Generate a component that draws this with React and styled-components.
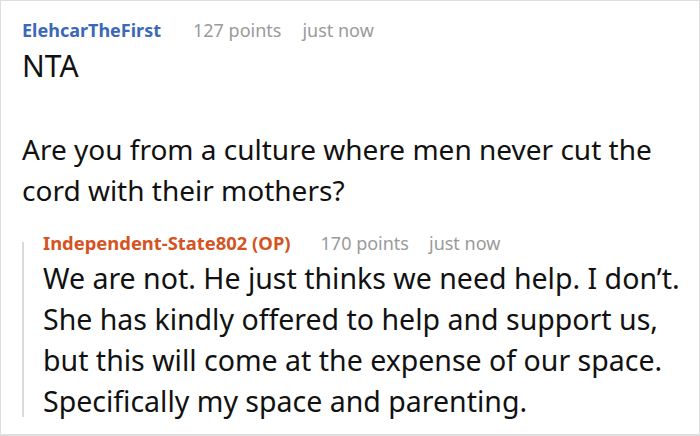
import styled, { createGlobalStyle } from "styled-components";

const GlobalStyle = createGlobalStyle`
  html, body {
    margin: 0;
    padding: 0;
    background: #fff;
  }
  body {
    font-family: "Noto Sans", "Open Sans", sans-serif;
  }
`;

const Card = styled.div`
  box-sizing: border-box;
  width: 700px;
  height: 436px;
  border: 1px solid #dedede;
  border-bottom-width: 2px;
  padding: 18px 0 0 21px;
  overflow: hidden;
`;

const Meta = styled.div`
  display: flex;
  align-items: baseline;
  height: ${(p) => (p.$reply ? "24px" : "22px")};
  line-height: ${(p) => (p.$reply ? "24px" : "22px")};
  white-space: nowrap;
`;

const Author = styled.span`
  font-weight: 700;
  font-size: ${(p) => (p.$op ? "18.4px" : "18px")};
  color: ${(p) => (p.$op ? "#d4531f" : "#3b69b5")};
`;

const Info = styled.span`
  font-size: 18px;
  color: #9a9a9a;
  margin-left: ${(p) => p.$gap}px;
`;

const Body = styled.div`
  margin-top: ${(p) => (p.$reply ? "3px" : "4px")};
  font-size: ${(p) => (p.$reply ? "28.5px" : "28px")};
  line-height: 41px;
  color: #111;
  width: ${(p) => (p.$reply ? "645px" : "660px")};
`;

const Para = styled.p`
  margin: 0;
  font-size: ${(p) => (p.$size ? `${p.$size}px` : "inherit")};
  line-height: ${(p) => (p.$size ? "42px" : "inherit")};
`;

const Spacer = styled.div`
  height: 42px;
`;

const Reply = styled.div`
  position: relative;
  margin-top: 20px;
  padding-left: 21px;

  &::before {
    content: "";
    position: absolute;
    left: 0;
    top: 11px;
    bottom: 5px;
    width: 1.5px;
    background: #dadada;
  }
`;

function Comment({ author, points, time, op, reply, gaps, children }) {
  return (
    <>
      <Meta $reply={reply}>
        <Author $op={op}>{author}</Author>
        <Info $gap={gaps[0]}>{points} points</Info>
        <Info $gap={gaps[1]}>{time}</Info>
      </Meta>
      <Body $reply={reply}>{children}</Body>
    </>
  );
}

export default function App() {
  return (
    <>
      <GlobalStyle />
      <Card>
        <Comment
          author="ElehcarTheFirst"
          points={127}
          time="just now"
          gaps={[32, 21]}
        >
          <Para $size={30}>NTA</Para>
          <Spacer />
          <Para>
            Are you from a culture where men never cut the cord with their
            mothers?
          </Para>
        </Comment>
        <Reply>
          <Comment
            author="Independent-State802 (OP)"
            points={170}
            time="just now"
            gaps={[30, 20]}
            op
            reply
          >
            <Para>
              We are not. He just thinks we need help. I don’t. She has kindly
              offered to help and support us, but this will come at the expense
              of our space. Specifically my space and parenting.
            </Para>
          </Comment>
        </Reply>
      </Card>
    </>
  );
}
